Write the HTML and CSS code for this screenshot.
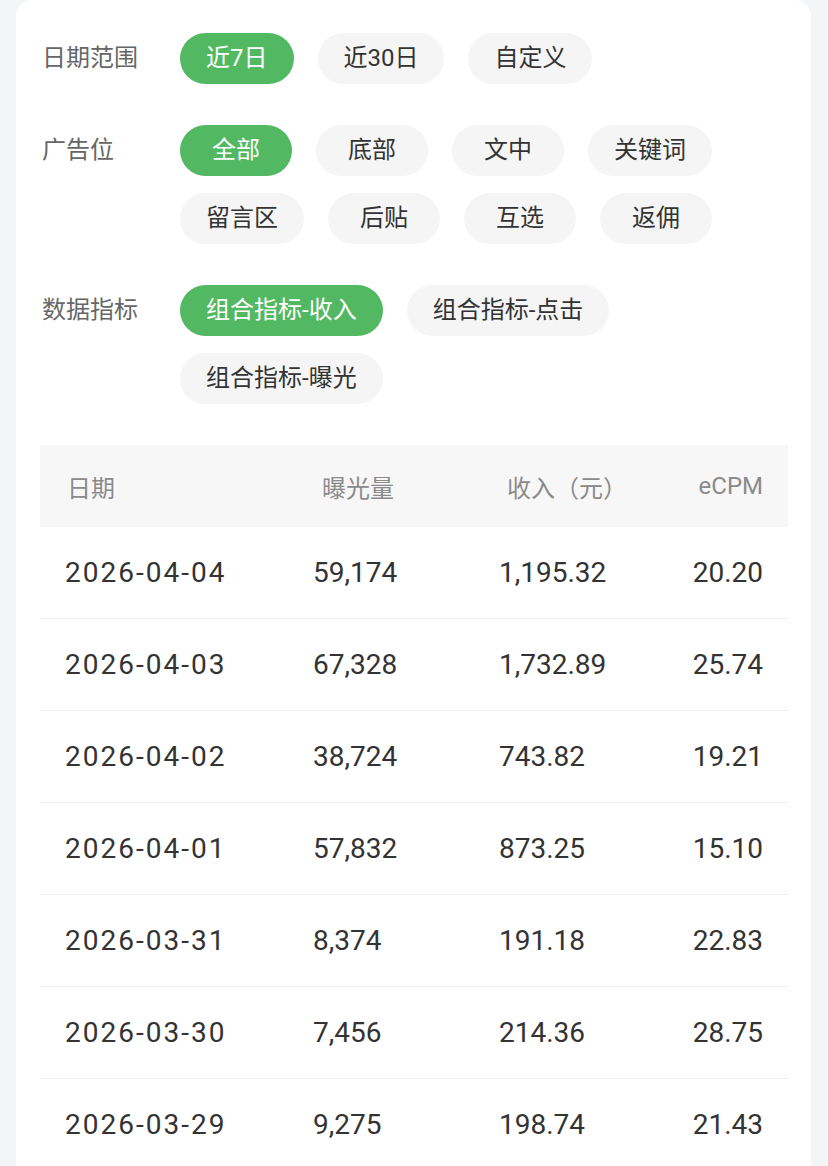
FILE: index.html
```html
<!DOCTYPE html>
<html lang="zh-CN">
<head>
<meta charset="UTF-8">
<meta name="viewport" content="width=device-width, initial-scale=1.0">
<title>收入数据</title>
<link rel="stylesheet" href="styles.css">
</head>
<body>

<div class="card">

  <!-- 筛选条件 -->
  <div class="filter-group">
    <div class="filter-label">日期范围</div>
    <div class="chip-list">
      <span class="chip active">近7日</span>
      <span class="chip">近30日</span>
      <span class="chip">自定义</span>
    </div>
  </div>

  <div class="filter-group">
    <div class="filter-label">广告位</div>
    <div class="chip-list">
      <span class="chip active">全部</span>
      <span class="chip">底部</span>
      <span class="chip">文中</span>
      <span class="chip">关键词</span>
      <span class="chip">留言区</span>
      <span class="chip">后贴</span>
      <span class="chip">互选</span>
      <span class="chip">返佣</span>
    </div>
  </div>

  <div class="filter-group">
    <div class="filter-label">数据指标</div>
    <div class="chip-list">
      <span class="chip active">组合指标-收入</span>
      <span class="chip">组合指标-点击</span>
      <span class="chip">组合指标-曝光</span>
    </div>
  </div>

  <!-- 数据表 -->
  <div class="data-table">
    <div class="table-row table-head">
      <div class="cell">日期</div>
      <div class="cell col-views">曝光量</div>
      <div class="cell col-income">收入（元）</div>
      <div class="cell col-ecpm">eCPM</div>
    </div>
    <div class="table-row">
      <div class="cell date">2026-04-04</div>
      <div class="cell">59,174</div>
      <div class="cell">1,195.32</div>
      <div class="cell col-ecpm">20.20</div>
    </div>
    <div class="table-row">
      <div class="cell date">2026-04-03</div>
      <div class="cell">67,328</div>
      <div class="cell">1,732.89</div>
      <div class="cell col-ecpm">25.74</div>
    </div>
    <div class="table-row">
      <div class="cell date">2026-04-02</div>
      <div class="cell">38,724</div>
      <div class="cell">743.82</div>
      <div class="cell col-ecpm">19.21</div>
    </div>
    <div class="table-row">
      <div class="cell date">2026-04-01</div>
      <div class="cell">57,832</div>
      <div class="cell">873.25</div>
      <div class="cell col-ecpm">15.10</div>
    </div>
    <div class="table-row">
      <div class="cell date">2026-03-31</div>
      <div class="cell">8,374</div>
      <div class="cell">191.18</div>
      <div class="cell col-ecpm">22.83</div>
    </div>
    <div class="table-row">
      <div class="cell date">2026-03-30</div>
      <div class="cell">7,456</div>
      <div class="cell">214.36</div>
      <div class="cell col-ecpm">28.75</div>
    </div>
    <div class="table-row">
      <div class="cell date">2026-03-29</div>
      <div class="cell">9,275</div>
      <div class="cell">198.74</div>
      <div class="cell col-ecpm">21.43</div>
    </div>
  </div>

</div>

</body>
</html>
```

FILE: styles.css
```css
/* --- Page --- */
body {
  margin: 0;
  background-color: #f4f5f7;
  font-family: Roboto, "Noto Sans CJK SC", sans-serif;
  color: #333;
}

.card {
  background-color: #fff;
  margin: 0 17px 0 16px;
  padding: 33px 23px 0 24px;
  border-radius: 16px 16px 0 0;
}

/* --- Filters --- */
.filter-group {
  display: flex;
  align-items: flex-start;
  margin-bottom: 41px;
}

.filter-label {
  width: 138px;
  padding-left: 2px;
  flex-shrink: 0;
  font-size: 24px;
  line-height: 51px;
  color: #666;
}

.chip-list {
  display: flex;
  flex-wrap: wrap;
  gap: 17px 24px;
}

.chip {
  min-width: 60px;
  height: 51px;
  padding: 0 26px;
  border-radius: 26px;
  background-color: #f5f5f5;
  color: #333;
  font-size: 24px;
  line-height: 51px;
  text-align: center;
}

.chip.active {
  background-color: #52b862;
  color: #fff;
}

/* --- Table --- */
.data-table {
  margin-top: 0;
}

.table-row {
  display: grid;
  grid-template-columns: 248px 186px 1fr 120px;
  align-items: center;
  height: 91px;
  padding: 0 25px;
  border-bottom: 1px solid #efefef;
  font-size: 28px;
}

.table-head {
  height: 82px;
  border-bottom: none;
  background-color: #f7f7f7;
  font-size: 24px;
  color: #8a8a8a;
}

.table-head .cell:first-child {
  padding-left: 2px;
}

.table-head .col-views {
  padding-left: 9px;
}

.table-head .col-income {
  padding-left: 8px;
}

.col-ecpm {
  text-align: right;
}

.date {
  letter-spacing: 2px;
}
```
